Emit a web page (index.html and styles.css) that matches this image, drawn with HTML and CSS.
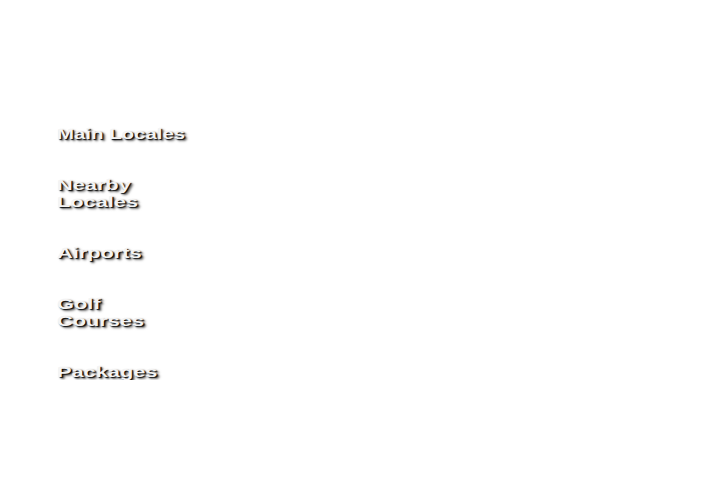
FILE: index.html
```html
<!DOCTYPE html>
<html>
<head>
<meta charset="utf-8">
<link rel="stylesheet" href="styles.css">
</head>
<body>
<nav class="menu">
  <div class="item item-tight">Main Locales</div>
  <div class="item">Nearby<br>Locales</div>
  <div class="item">Airports</div>
  <div class="item">Golf<br>Courses</div>
  <div class="item">Packages</div>
</nav>
</body>
</html>
```
FILE: styles.css
```css
html, body {
  margin: 0;
  background: #ffffff;
}
.menu {
  display: flex;
  flex-direction: column;
  gap: 34px;
  padding: 125px 0 0 57px;
  width: 100px;
}
.item {
  font-family: "Liberation Sans", Arial, sans-serif;
  font-weight: bold;
  font-size: 15px;
  line-height: 17px;
  color: #f4f4f4;
  white-space: nowrap;
  transform: scaleX(1.45);
  transform-origin: 0 0;
  text-shadow: 1px 1px 1px #000, 2px 2px 2px rgba(0,0,0,0.6);
}
.item-tight {
  transform: scaleX(1.36);
}
```
